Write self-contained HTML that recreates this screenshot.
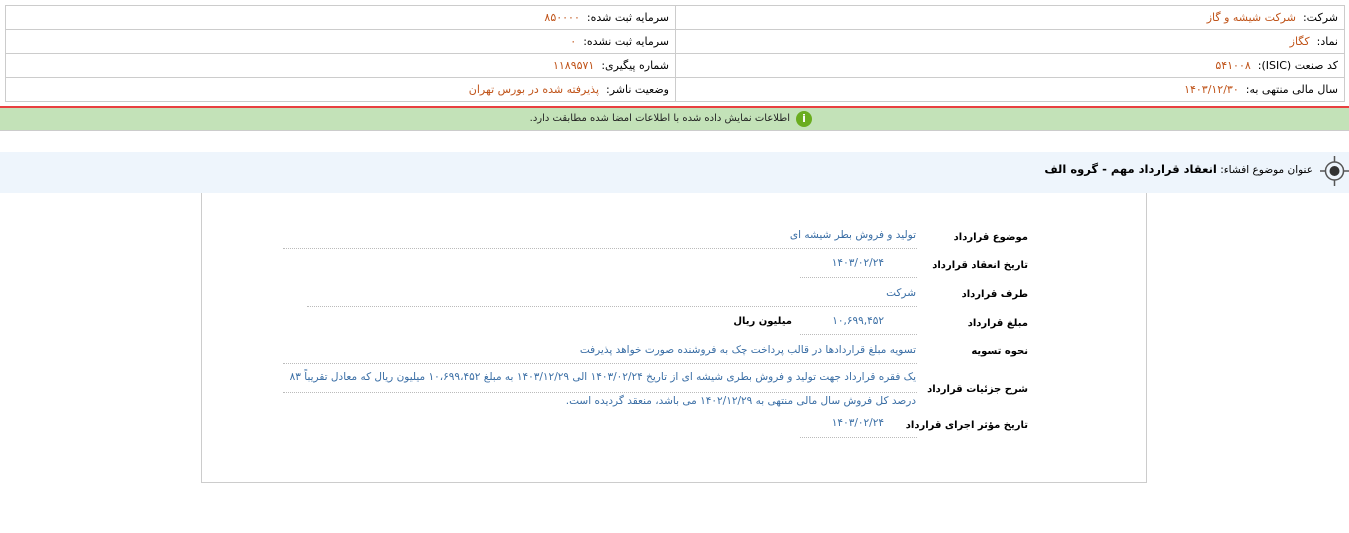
<!DOCTYPE html>
<html><head><meta charset="utf-8"><style>
body{margin:0;width:1349px;height:533px;background:#fff;font-family:"DejaVu Sans","Noto Sans CJK SC",sans-serif;font-size:11px;color:#000;position:relative;overflow:hidden}
.a{position:absolute;direction:rtl;white-space:nowrap}
.o{color:#c0541a}
.b{color:#3a6ea5}
table.t{position:absolute;left:5px;top:5px;width:1340px;border-collapse:collapse;direction:rtl}
table.t td{border:1px solid #ccc;height:23px;padding:0 6px;font-size:11px}
.dot{position:absolute;border-top:1px dotted #bbb;height:0}
.lb{font-weight:bold;font-size:10px}
</style></head><body>
<table class="t">
<tr><td style="width:656px">شرکت: &nbsp;<span class="o">شرکت شیشه و گاز</span></td><td>سرمایه ثبت شده: &nbsp;<span class="o">۸۵۰۰۰۰</span></td></tr>
<tr><td>نماد: &nbsp;<span class="o">کگاز</span></td><td>سرمایه ثبت نشده: &nbsp;<span class="o">۰</span></td></tr>
<tr><td>کد صنعت (ISIC): &nbsp;<span class="o">۵۴۱۰۰۸</span></td><td>شماره پیگیری: &nbsp;<span class="o">۱۱۸۹۵۷۱</span></td></tr>
<tr><td>سال مالی منتهی به: &nbsp;<span class="o">۱۴۰۳/۱۲/۳۰</span></td><td>وضعیت ناشر: &nbsp;<span class="o">پذیرفته شده در بورس تهران</span></td></tr>
</table>
<div style="position:absolute;left:0;top:106px;width:1349px;height:2px;background:#e84040"></div>
<div style="position:absolute;left:0;top:108px;width:1349px;height:22px;background:#c3e2b8;border-bottom:1px solid #ccc"></div>
<div class="a" style="right:559px;top:113px;color:#222;font-size:10px">اطلاعات نمایش داده شده با اطلاعات امضا شده مطابقت دارد.</div>
<div style="position:absolute;left:796px;top:111px;width:16px;height:16px;border-radius:50%;background:#6aad1f;color:#fff;font-size:11px;font-weight:bold;text-align:center;line-height:16px">i</div>
<div style="position:absolute;left:0;top:152px;width:1349px;height:41px;background:#eef5fc"></div>
<svg style="position:absolute;left:1320px;top:156px" width="29" height="30"><line x1="0" y1="15" x2="29" y2="15" stroke="#555" stroke-width="1.5"/><line x1="14.5" y1="0" x2="14.5" y2="30" stroke="#555" stroke-width="1.5"/><circle cx="14.5" cy="15" r="9" fill="#eef5fc" stroke="#555" stroke-width="1.5"/><circle cx="14.5" cy="15" r="5" fill="#333"/></svg>
<div class="a" style="right:36px;top:162px;font-size:10.5px">عنوان موضوع افشاء: <b style="font-size:11.5px">انعقاد قرارداد مهم - گروه الف</b></div>
<div style="position:absolute;left:201px;top:193px;width:944px;height:289px;border:1px solid #ccc;border-top:none"></div>
<div class="a lb" style="right:321px;top:232px">موضوع قرارداد</div>
<div class="a b" style="right:433px;top:229px;font-size:10.5px">تولید و فروش بطر شیشه ای</div>
<div class="dot" style="left:283px;top:248px;width:634px"></div>
<div class="a lb" style="right:321px;top:260px">تاریخ انعقاد قرارداد</div>
<div class="a b" style="right:465px;top:257px;font-size:10.5px">۱۴۰۳/۰۲/۲۴</div>
<div class="dot" style="left:800px;top:277px;width:117px"></div>
<div class="a lb" style="right:321px;top:289px">طرف قرارداد</div>
<div class="a b" style="right:433px;top:287px;font-size:10.5px">شرکت</div>
<div class="dot" style="left:307px;top:306px;width:610px"></div>
<div class="a lb" style="right:321px;top:318px">مبلغ قرارداد</div>
<div class="a b" style="right:465px;top:315px;font-size:10.5px">۱۰,۶۹۹,۴۵۲</div>
<div class="a lb" style="right:557px;top:316px">میلیون ریال</div>
<div class="dot" style="left:800px;top:334px;width:117px"></div>
<div class="a lb" style="right:321px;top:346px">نحوه تسویه</div>
<div class="a b" style="right:433px;top:344px;font-size:10.5px">تسویه مبلغ قراردادها در قالب پرداخت چک به فروشنده صورت خواهد پذیرفت</div>
<div class="dot" style="left:283px;top:363px;width:634px"></div>
<div class="a lb" style="right:321px;top:384px">شرح جزئیات قرارداد</div>
<div class="a b" style="right:433px;top:371px;font-size:10.5px">یک فقره قرارداد جهت تولید و فروش بطری شیشه ای از تاریخ ۱۴۰۳/۰۲/۲۴ الی ۱۴۰۳/۱۲/۲۹ به مبلغ ۱۰،۶۹۹،۴۵۲ میلیون ریال که معادل تقریباً ۸۳</div>
<div class="dot" style="left:283px;top:392px;width:634px"></div>
<div class="a b" style="right:433px;top:395px;font-size:10.5px">درصد کل فروش سال مالی منتهی به ۱۴۰۲/۱۲/۲۹ می باشد، منعقد گردیده است.</div>
<div class="a lb" style="right:321px;top:420px">تاریخ مؤثر اجرای قرارداد</div>
<div class="a b" style="right:465px;top:417px;font-size:10.5px">۱۴۰۳/۰۲/۲۴</div>
<div class="dot" style="left:800px;top:437px;width:117px"></div>
</body></html>
